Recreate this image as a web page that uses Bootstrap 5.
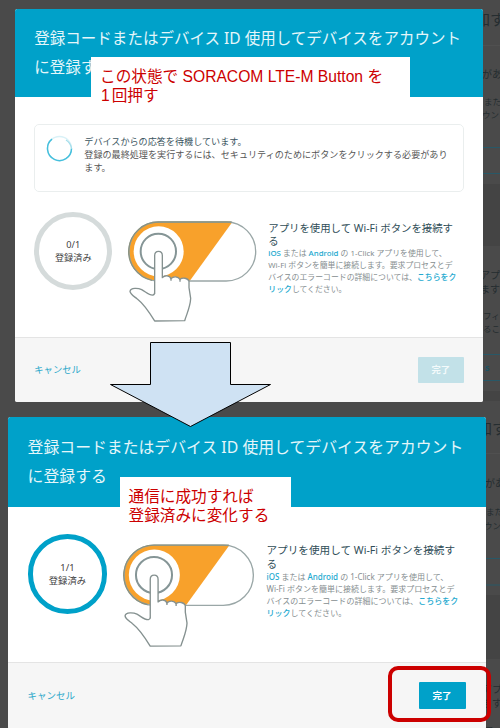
<!DOCTYPE html>
<html lang="ja">
<head>
<meta charset="utf-8">
<meta name="viewport" content="width=device-width, initial-scale=1">
<title>デバイスの登録</title>
<link href="https://cdn.jsdelivr.net/npm/bootstrap@5.3.0/dist/css/bootstrap.min.css" rel="stylesheet">
<style>
body{background:#4a4a4a;font-family:"Noto Sans","Noto Sans CJK JP",sans-serif;height:728px}
.stage{width:500px;height:728px;padding-top:8.5px}
.backdrop-page{left:0;top:0}
/* Both dialogs share em-based metrics; the second is slightly larger */
.dialog{font-size:10px;width:46.85em;margin-left:14.8px;border-radius:.25em;background:#fff;color:#444}
.dialog-b{font-size:10.21px;margin-left:7.7px;margin-top:14.5px;width:46.8em}
.dialog-head{background:#00a1c9;height:8.87em;padding:1.58em 1.95em 0}
.dialog-title{font-size:1.553em;line-height:1.855;color:#e4f6fa;font-weight:400;white-space:nowrap}
.dialog-main{height:23.95em;padding:2.65em 1.95em 0}
.dialog-b .dialog-main{height:15.15em;padding-top:2.65em}
.wait-box{border:.16em solid #eaeeee;border-radius:.5em;height:6.8em;padding:1.0em 1.1em;margin-bottom:2.05em}
.wait-box svg{width:2.7em;height:2.7em;margin-right:1.1em;margin-top:.02em}
.wait-text{font-size:.911em;line-height:1.47;white-space:nowrap;color:#555}
.wait-text .lead-line{color:#3b5560}
.ring{width:7.8em;height:7.8em;border:.55em solid #d5dbdb;border-radius:50%;line-height:1.32}
.ring span{font-size:.92em;line-height:1.42}
.dialog-b .ring{border-color:#00a1c9}
.press-art{width:13.17em;height:10.67em;margin-left:1.43em;margin-top:.63em}
.app-info{margin-left:1em;padding-top:.98em;white-space:nowrap}
.app-title{font-size:1.04em;line-height:1.27;color:#2f4d57}
.app-text{font-size:.787em;line-height:1.5;color:#868e90}
.app-text a{color:#22a9cf;text-decoration:none;font-weight:500}
.dialog-foot{height:6.55em;background:#f6f6f6;border-top:.14em solid #e4e4e4;padding:0 1.95em}
.cancel{font-size:.93em;color:#2ba8ca;text-decoration:none}
.done{font-size:.93em;width:4.95em;height:2.82em;padding:0;border:0;border-radius:.1em;background:#00a1c9;color:#fff;font-weight:700;line-height:1}
.done:disabled{background:#c2e1e8;color:#f3fafb;opacity:1}
.note{background:#fff;color:#c00;font:15.65px/19.3px "Liberation Sans","Noto Sans CJK JP",sans-serif;white-space:nowrap}
.note-a{left:91px;top:57px;width:318.5px;height:53px;padding:9.5px 0 0 9px}
.note-a .num{letter-spacing:2px;margin-left:1px}
.note-b{left:120px;top:477.3px;width:171px;height:50px;padding:9.5px 0 0 8.5px}
.arrow{left:0;top:0}
.marker{left:387.5px;top:666.3px;width:103px;height:55.5px;border:4px solid #c00;border-radius:10px}
</style>
<script src="https://cdn.jsdelivr.net/npm/bootstrap@5.3.0/dist/js/bootstrap.bundle.min.js"></script>
</head>
<body class="overflow-hidden">
<main class="stage position-relative overflow-hidden">
<svg class="backdrop-page position-absolute" width="500" height="728" viewBox="0 0 500 728" fill="#252d30" aria-hidden="true">
  <path fill="#505050" d="M483 45h17v1h-17z"/>
  <path fill="#444" d="M483 184h17v62h-17z"/>
  <path fill="none" stroke="#285867" d="M483 147.500h17M483 173.500h17"/>
  <text x="475" y="25" font-size="15">加す</text>
  <text x="482" y="78" font-size="10">があ</text>
  <text x="484" y="105" font-size="8.500">また</text>
  <text x="482" y="118" font-size="8.500">ウン</text>
  <text x="480" y="279" font-size="10">アプ</text>
  <text x="480" y="292.500" font-size="10">ます</text>
  <text x="483" y="318.500" font-size="8.500">フィ</text>
  <text x="483" y="331.500" font-size="8.500">るこ</text>
  <path fill="none" stroke="#285867" d="M483 354.500h17M483 380.500h17"/>
  <text x="485" y="371" font-size="9" font-weight="700" fill="#1d5363">s</text>
  <path fill="#444" d="M483 391h17v10h-17z"/>
  <path fill="#505050" d="M486 453h14v1h-14z"/>
  <path fill="#444" d="M486 595h14v64h-14z"/>
  <path fill="none" stroke="#285867" d="M486 558.500h14M486 585h14"/>
  <text x="477" y="434" font-size="15">加す</text>
  <text x="485" y="487" font-size="10">があ</text>
  <text x="486" y="515" font-size="8.500">また</text>
  <text x="484" y="528.500" font-size="8.500">ウン</text>
  <text x="482" y="693" font-size="10">アプ</text>
  <text x="482" y="706.500" font-size="10">ます</text>
  <text x="485" y="733" font-size="8.500">フィ</text>
</svg>

<section class="dialog position-relative overflow-hidden">
  <header class="dialog-head"><h1 class="dialog-title m-0">登録コードまたはデバイス ID 使用してデバイスをアカウント<br>に登録する</h1></header>
  <div class="dialog-main">
    <div class="wait-box d-flex align-items-start">
      <svg viewBox="0 0 27 27" fill="none" stroke-width="1.300" class="flex-shrink-0"><circle cx="13.500" cy="13.500" r="12" stroke="#d9f1f7"/><path d="M6 4.200A12 12 0 1 0 25.500 13.500" stroke="#45bfdc" stroke-width="1.500"/><path d="M25.500 13.500A12 12 0 0 0 20 5" stroke="#a5deeb"/></svg>
      <p class="wait-text m-0"><span class="lead-line">デバイスからの応答を待機しています。</span><br>登録の最終処理を実行するには、セキュリティのためにボタンをクリックする必要があり<br>ます。</p>
    </div>
    <div class="d-flex align-items-start">
      <div class="ring flex-shrink-0 d-flex flex-column align-items-center justify-content-center"><span>0/1</span><span>登録済み</span></div>
      <svg class="press-art flex-shrink-0" viewBox="380 55 395 320">
        <g id="press">
          <rect x="386" y="67" width="380" height="177" rx="88.500" fill="#fff"/>
          <path d="M474.500 67H696L568 244H474.500A88.500 88.500 0 0 1 474.500 67Z" fill="#f8a12b"/>
          <rect x="386" y="67" width="380" height="177" rx="88.500" fill="none" stroke="#9aa7a7" stroke-width="4"/>
          <path d="M474.500 67H694M474.500 67A88.500 88.500 0 0 0 455 242" fill="none" stroke="#8a9280" stroke-width="4"/>
          <circle cx="475" cy="155" r="75" fill="#fff"/>
          <circle cx="474" cy="155" r="53" fill="#fff" stroke="#859596" stroke-width="6"/>
          <path d="M463 283V168C463 151 486 151 486 168V234C493 226 508 226 512 237C519 229 533 230 539 239C546 233 563 234 566 245V264L571 296C570 322 560 340 553 363L463 364C447 338 433 315 411 298C400 289 390 284 389 275C391 263 414 265 424 270C437 277 448 288 458 286Q463 285 463 278" fill="#fff" stroke="#859190" stroke-width="4" stroke-linejoin="round"/>
          <path d="M512 236V243M539 238V246" stroke="#859190" stroke-width="4"/>
        </g>
      </svg>
      <div class="app-info">
        <h2 class="app-title m-0 fw-normal">アプリを使用して Wi-Fi ボタンを接続す<br>る</h2>
        <p class="app-text m-0"><a href="#">iOS</a> または <a href="#">Android</a> の 1-Click アプリを使用して、<br>Wi-Fi ボタンを簡単に接続します。要求プロセスとデ<br>バイスのエラーコードの詳細については、<a href="#">こちらをク<br>リック</a>してください。</p>
      </div>
    </div>
  </div>
  <footer class="dialog-foot d-flex align-items-center justify-content-between"><a class="cancel" href="#">キャンセル</a><button class="btn done" disabled>完了</button></footer>
</section>

<section class="dialog dialog-b position-relative overflow-hidden">
  <header class="dialog-head"><h1 class="dialog-title m-0">登録コードまたはデバイス ID 使用してデバイスをアカウント<br>に登録する</h1></header>
  <div class="dialog-main">
    <div class="d-flex align-items-start">
      <div class="ring flex-shrink-0 d-flex flex-column align-items-center justify-content-center"><span>1/1</span><span>登録済み</span></div>
      <svg class="press-art flex-shrink-0" viewBox="380 55 395 320"><use href="#press"/></svg>
      <div class="app-info">
        <h2 class="app-title m-0 fw-normal">アプリを使用して Wi-Fi ボタンを接続す<br>る</h2>
        <p class="app-text m-0"><a href="#">iOS</a> または <a href="#">Android</a> の 1-Click アプリを使用して、<br>Wi-Fi ボタンを簡単に接続します。要求プロセスとデ<br>バイスのエラーコードの詳細については、<a href="#">こちらをク<br>リック</a>してください。</p>
      </div>
    </div>
  </div>
  <footer class="dialog-foot d-flex align-items-center justify-content-between"><a class="cancel" href="#">キャンセル</a><button class="btn done">完了</button></footer>
</section>

<div class="note note-a position-absolute">この状態で SORACOM LTE-M Button を<br><span class="num">1</span>回押す</div>
<div class="note note-b position-absolute">通信に成功すれば<br>登録済みに変化する</div>
<svg class="arrow position-absolute" width="300" height="440" viewBox="0 0 300 440"><path d="M150.500 342.500H230.500V384.500H270.500L190.500 426.500L110.500 384.500H150.500Z" fill="#cfe2f3" stroke="#000"/></svg>
<div class="marker position-absolute"></div>
</main>
</body>
</html>
